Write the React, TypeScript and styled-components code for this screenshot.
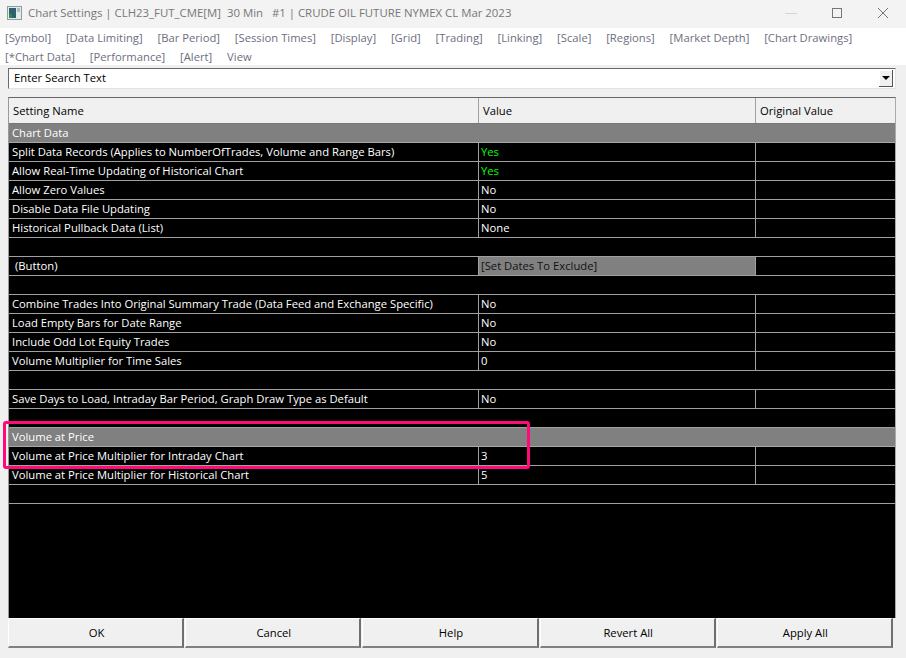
import React from 'react';
import styled, { createGlobalStyle } from 'styled-components';

const GlobalStyle = createGlobalStyle`
  html, body {
    margin: 0;
    padding: 0;
    background: #f0f0f0;
  }
  body {
    font-family: 'Open Sans', 'Noto Sans', sans-serif;
    font-size: 11.25px;
  }
`;

const Window = styled.div`
  position: relative;
  width: 906px;
  height: 658px;
  overflow: hidden;
  background: #f0f0f0;
  display: flex;
  flex-direction: column;
`;

const TitleBar = styled.div`
  height: 28px;
  box-sizing: border-box;
  display: flex;
  align-items: center;
  padding: 0 0 3px 7px;
  background: #f3f3f3;
  color: #777;
  font-size: 11.4px;
`;

const TitleText = styled.span`
  margin-left: 6px;
  flex: 1;
  white-space: pre;
`;

const WindowButtons = styled.div`
  display: flex;
  align-items: center;
  margin-right: 17px;
  gap: 34px;
`;

const TabArea = styled.div`
  height: 37px;
  box-sizing: border-box;
  background: #fff;
  padding-left: 5px;
  display: flex;
  flex-direction: column;
`;

const TabRow = styled.div`
  height: 19px;
  flex: none;
  display: flex;
  gap: 14.8px;
  align-items: center;
  color: #6e6e80;
  white-space: nowrap;
`;

const SearchBox = styled.div`
  margin: 3px 10px 0 8px;
  height: 21px;
  box-sizing: border-box;
  background: #fff;
  border-top: 1px solid #6a6a6a;
  border-left: 1px solid #6a6a6a;
  border-bottom: 1px solid #e4e4e4;
  border-right: 1px solid #e4e4e4;
  display: flex;
  align-items: center;
  justify-content: space-between;
  padding-left: 5px;
  color: #000;
`;

const SearchText = styled.span`
  padding-bottom: 2px;
`;

const DropButton = styled.div`
  width: 14px;
  height: 17px;
  box-sizing: border-box;
  margin-right: 2px;
  background: #f0f0f0;
  border-right: 1px solid #555;
  border-bottom: 1px solid #555;
  box-shadow: inset 1px 1px 0 #fff;
  display: flex;
  align-items: center;
  justify-content: center;
  &::after {
    content: '';
    border-left: 4px solid transparent;
    border-right: 4px solid transparent;
    border-top: 4px solid #000;
  }
`;

const Table = styled.div`
  margin: 8px 10px 0 8px;
  height: 521px;
  box-sizing: border-box;
  border-top: 1px solid #666;
  border-left: 1px solid #999;
  border-right: 1px solid #aaa;
  background: #000;
  display: flex;
  flex-direction: column;
`;

const HeaderRow = styled.div`
  height: 26px;
  flex: none;
  display: grid;
  grid-template-columns: 470px 277px 1fr;
  background: #f0f0f0;
  border-bottom: 1px solid #777;
  box-sizing: border-box;
  color: #000;
`;

const HeaderCell = styled.div`
  display: flex;
  align-items: center;
  padding: 0 0 1px 4px;
  border-right: 1px solid #a0a0a0;
  &:last-child {
    border-right: 0;
  }
`;

const GroupRow = styled.div`
  height: 19px;
  flex: none;
  box-sizing: border-box;
  background: #808080;
  border-bottom: 1px solid #a8a8a8;
  color: #fff;
  padding: 0 0 1px 3px;
  display: flex;
  align-items: center;
`;

const Row = styled.div`
  height: 19px;
  flex: none;
  box-sizing: border-box;
  border-bottom: 1px solid #a0a0a0;
  display: grid;
  grid-template-columns: 470px 277px 1fr;
  color: #fff;
`;

const BlankRow = styled.div`
  height: 19px;
  flex: none;
  box-sizing: border-box;
  border-bottom: 1px solid #a0a0a0;
`;

const Cell = styled.div<{ $indent?: boolean }>`
  display: flex;
  align-items: center;
  padding: 0 0 1px ${(p) => (p.$indent ? 6 : 3)}px;
  border-right: 1px solid #a0a0a0;
  white-space: nowrap;
  &:last-child {
    border-right: 0;
  }
`;

const ValueCell = styled(Cell)<{ $tone?: 'green' | 'button' }>`
  padding-left: 2px;
  color: ${(p) => (p.$tone === 'green' ? '#00ff00' : p.$tone === 'button' ? '#111' : '#fff')};
  background: ${(p) => (p.$tone === 'button' ? '#808080' : 'transparent')};
`;

const ButtonBar = styled.div`
  margin: 0 13px 0 8px;
  height: 30px;
  display: grid;
  grid-template-columns: repeat(5, 1fr);
  gap: 1px;
`;

const DialogButton = styled.div`
  box-sizing: border-box;
  background: #f0f0f0;
  border-top: 1px solid #fff;
  border-left: 1px solid #fff;
  border-right: 2px solid #6f6f6f;
  border-bottom: 2px solid #808080;
  display: flex;
  align-items: center;
  justify-content: center;
  padding: 0 0 1px 2px;
  color: #000;
`;

const Highlight = styled.div`
  position: absolute;
  left: 3px;
  top: 421px;
  width: 527px;
  height: 48px;
  box-sizing: border-box;
  border: 3px solid #ff0a78;
  border-radius: 3px;
  pointer-events: none;
`;

const tabsTop = [
  '[Symbol]', '[Data Limiting]', '[Bar Period]', '[Session Times]', '[Display]', '[Grid]',
  '[Trading]', '[Linking]', '[Scale]', '[Regions]', '[Market Depth]', '[Chart Drawings]',
];
const tabsBottom = ['[*Chart Data]', '[Performance]', '[Alert]', 'View'];

type Item =
  | { kind: 'group'; label: string }
  | { kind: 'blank' }
  | { kind: 'row'; name: string; value: string; tone?: 'green' | 'button'; indent?: boolean };

const items: Item[] = [
  { kind: 'group', label: 'Chart Data' },
  { kind: 'row', name: 'Split Data Records (Applies to NumberOfTrades, Volume and Range Bars)', value: 'Yes', tone: 'green' },
  { kind: 'row', name: 'Allow Real-Time Updating of Historical Chart', value: 'Yes', tone: 'green' },
  { kind: 'row', name: 'Allow Zero Values', value: 'No' },
  { kind: 'row', name: 'Disable Data File Updating', value: 'No' },
  { kind: 'row', name: 'Historical Pullback Data (List)', value: 'None' },
  { kind: 'blank' },
  { kind: 'row', name: '(Button)', value: '[Set Dates To Exclude]', tone: 'button', indent: true },
  { kind: 'blank' },
  { kind: 'row', name: 'Combine Trades Into Original Summary Trade (Data Feed and Exchange Specific)', value: 'No' },
  { kind: 'row', name: 'Load Empty Bars for Date Range', value: 'No' },
  { kind: 'row', name: 'Include Odd Lot Equity Trades', value: 'No' },
  { kind: 'row', name: 'Volume Multiplier for Time Sales', value: '0' },
  { kind: 'blank' },
  { kind: 'row', name: 'Save Days to Load, Intraday Bar Period, Graph Draw Type as Default', value: 'No' },
  { kind: 'blank' },
  { kind: 'group', label: 'Volume at Price' },
  { kind: 'row', name: 'Volume at Price Multiplier for Intraday Chart', value: '3' },
  { kind: 'row', name: 'Volume at Price Multiplier for Historical Chart', value: '5' },
  { kind: 'blank' },
];

const AppIcon = () => (
  <svg width="15" height="14" viewBox="0 0 15 14">
    <rect x="0.5" y="0.5" width="14" height="13" fill="#e4eaec" stroke="#8f9ca2" />
    <rect x="2" y="2" width="7" height="10" fill="#2f6070" />
    <rect x="2" y="8" width="3" height="4" fill="#2c8a4a" />
    <rect x="10" y="2" width="3" height="4" fill="#a9bcc2" />
  </svg>
);

export default function App() {
  return (
    <Window>
      <GlobalStyle />
      <TitleBar>
        <AppIcon />
        <TitleText>{'Chart Settings | CLH23_FUT_CME[M]  30 Min   #1 | CRUDE OIL FUTURE NYMEX CL Mar 2023'}</TitleText>
        <WindowButtons>
          <svg width="12" height="12" viewBox="0 0 12 12"><path d="M0 6.5h12" stroke="#d4d4d4" /></svg>
          <svg width="12" height="12" viewBox="0 0 12 12"><rect x="1.5" y="1.5" width="9" height="9" fill="none" stroke="#777" /></svg>
          <svg width="12" height="12" viewBox="0 0 12 12"><path d="M1 1l10 10M11 1L1 11" stroke="#777" /></svg>
        </WindowButtons>
      </TitleBar>
      <TabArea>
        <TabRow>{tabsTop.map((t) => <span key={t}>{t}</span>)}</TabRow>
        <TabRow>{tabsBottom.map((t) => <span key={t}>{t}</span>)}</TabRow>
      </TabArea>
      <SearchBox>
        <SearchText>Enter Search Text</SearchText>
        <DropButton />
      </SearchBox>
      <Table>
        <HeaderRow>
          <HeaderCell>Setting Name</HeaderCell>
          <HeaderCell>Value</HeaderCell>
          <HeaderCell>Original Value</HeaderCell>
        </HeaderRow>
        {items.map((item, i) => {
          if (item.kind === 'group') return <GroupRow key={i}>{item.label}</GroupRow>;
          if (item.kind === 'blank') return <BlankRow key={i} />;
          return (
            <Row key={i}>
              <Cell $indent={item.indent}>{item.name}</Cell>
              <ValueCell $tone={item.tone}>{item.value}</ValueCell>
              <Cell />
            </Row>
          );
        })}
      </Table>
      <ButtonBar>
        <DialogButton>OK</DialogButton>
        <DialogButton>Cancel</DialogButton>
        <DialogButton>Help</DialogButton>
        <DialogButton>Revert All</DialogButton>
        <DialogButton>Apply All</DialogButton>
      </ButtonBar>
      <Highlight />
    </Window>
  );
}
